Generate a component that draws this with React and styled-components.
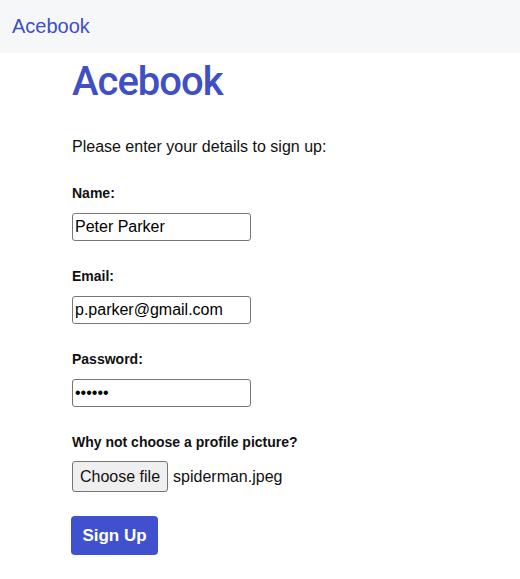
import React from "react";
import styled, { createGlobalStyle } from "styled-components";

const GlobalStyle = createGlobalStyle`
  body {
    margin: 0;
    background: #fff;
    font-family: "Liberation Sans", Arial, sans-serif;
    color: #111;
  }
`;

function App() {
  return (
    <>
      <GlobalStyle />
      <NavBar>
        <Brand>Acebook</Brand>
      </NavBar>
      <Main>
        <Title>Acebook</Title>
        <Intro>Please enter your details to sign up:</Intro>
        <Form onSubmit={(e) => e.preventDefault()}>
          <Field>
            <Label>Name:</Label>
            <TextInput type="text" defaultValue="Peter Parker" />
          </Field>
          <Field>
            <Label>Email:</Label>
            <TextInput type="email" defaultValue="p.parker@gmail.com" />
          </Field>
          <Field>
            <Label>Password:</Label>
            <TextInput type="password" defaultValue="secret" />
          </Field>
          <Field $last>
            <Label>Why not choose a profile picture?</Label>
            <FileRow>
              <FileButton type="button">Choose file</FileButton>
              <FileName>spiderman.jpeg</FileName>
            </FileRow>
          </Field>
          <SubmitButton type="submit">Sign Up</SubmitButton>
        </Form>
      </Main>
    </>
  );
}

const NavBar = styled.header`
  display: flex;
  align-items: center;
  height: 53px;
  padding: 0 12px;
  background: #f6f7f9;
`;

const Brand = styled.span`
  font-size: 20px;
  color: #3f4fc4;
`;

const Main = styled.main`
  padding: 6px 72px 20px;
`;

const Title = styled.h1`
  margin: 0;
  font-family: Roboto, "Liberation Sans", sans-serif;
  font-size: 40px;
  font-weight: 500;
  line-height: 46px;
  letter-spacing: -1px;
  color: #3f4fc4;
`;

const Intro = styled.p`
  margin: 32px 0 0;
  font-size: 16px;
  line-height: 20px;
`;

const Form = styled.form`
  display: flex;
  flex-direction: column;
  align-items: flex-start;
  margin-top: 28px;
`;

const Field = styled.div`
  display: flex;
  flex-direction: column;
  align-items: flex-start;
  gap: 11px;
  margin-bottom: ${({ $last }) => ($last ? "24px" : "27px")};
`;

const Label = styled.label`
  font-size: 14px;
  font-weight: 700;
  line-height: 17px;
  color: #111;
`;

const TextInput = styled.input`
  box-sizing: border-box;
  width: 179px;
  height: 28px;
  padding: 1px 2px;
  font-family: "Liberation Sans", Arial, sans-serif;
  font-size: 16px;
  color: #000;
  border: 1px solid #767676;
  border-radius: 3px;
  outline: none;
`;

const FileRow = styled.div`
  display: flex;
  align-items: center;
  gap: 5px;
  margin-top: -1px;
`;

const FileButton = styled.button`
  box-sizing: border-box;
  height: 31px;
  padding: 0 7px;
  font-family: "Liberation Sans", Arial, sans-serif;
  font-size: 16px;
  color: #111;
  background: #efefef;
  border: 1px solid #767676;
  border-radius: 3px;
`;

const FileName = styled.span`
  font-size: 16px;
`;

const SubmitButton = styled.button`
  margin-left: -1px;
  box-sizing: border-box;
  width: 87px;
  height: 39px;
  font-family: "Liberation Sans", Arial, sans-serif;
  font-size: 17px;
  font-weight: 700;
  color: #fff;
  background: #4051d0;
  border: none;
  border-radius: 4px;
  cursor: pointer;
`;

export default App;
